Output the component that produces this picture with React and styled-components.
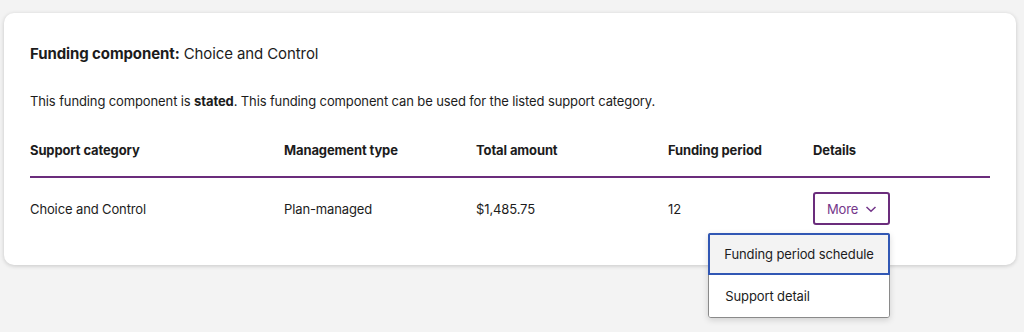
import styled, { createGlobalStyle } from "styled-components";

const GlobalStyle = createGlobalStyle`
  body {
    margin: 0;
    background: #f3f3f3;
    font-family: Inter, "Noto Sans", sans-serif;
    color: #1c1c1c;
  }
`;

const Page = styled.div`
  padding: 13px 8px 0 4px;
  height: 332px;
  box-sizing: border-box;
`;

const Card = styled.section`
  background: #fff;
  border-radius: 10px;
  box-shadow: 0 1px 4px rgba(0, 0, 0, 0.18);
  padding: 31px 26px 26px 26px;
  height: 252px;
  box-sizing: border-box;
`;

const Title = styled.h2`
  margin: 0;
  font-size: 15px;
  font-weight: 400;
  line-height: 20px;
  letter-spacing: -0.1px;
  b {
    font-weight: 700;
  }
`;

const Lead = styled.p`
  margin: 27px 0 0;
  font-size: 13px;
  line-height: 20px;
  letter-spacing: -0.12px;
`;

const Table = styled.div`
  margin-top: 29px;
  width: 960px;
`;

const Row = styled.div`
  display: grid;
  grid-template-columns: 254px 192px 192px 145px 1fr;
  align-items: center;
  line-height: 20px;
  font-size: 13px;
  letter-spacing: -0.12px;
  font-weight: ${(p) => (p.$head ? 700 : 400)};
  padding-bottom: ${(p) => (p.$head ? "16px" : "0")};
  height: ${(p) => (p.$head ? "auto" : "61px")};
  border-bottom: ${(p) => (p.$head ? "2px solid #6b2d7c" : "none")};
`;

const Cell = styled.div``;

const ButtonWrap = styled.div`
  position: relative;
  display: inline-block;
`;

const MoreButton = styled.button`
  display: inline-flex;
  align-items: center;
  gap: 7px;
  height: 33px;
  padding: 0 11px 0 12px;
  background: #fff;
  border: 2px solid #6b2d7c;
  border-radius: 3px;
  color: #74368a;
  font-family: inherit;
  font-size: 13px;
  letter-spacing: -0.12px;
`;

const Menu = styled.ul`
  position: absolute;
  top: 41px;
  right: 0;
  width: 180px;
  margin: 0;
  padding: 0;
  list-style: none;
  background: #fff;
  border: 1px solid #8a8a8a;
  border-radius: 3px;
  box-shadow: 0 2px 6px rgba(0, 0, 0, 0.15);
  z-index: 2;
`;

const MenuItem = styled.li`
  height: 42px;
  box-sizing: border-box;
  display: flex;
  align-items: center;
  padding: 0 14px;
  font-size: 13px;
  letter-spacing: -0.12px;
  white-space: nowrap;
  background: ${(p) => (p.$active ? "#f3f3f3" : "#fff")};
  border: 2px solid ${(p) => (p.$active ? "#3157b4" : "transparent")};
  border-radius: ${(p) => (p.$active ? "2px 2px 0 0" : "0 0 2px 2px")};
  margin: ${(p) => (p.$active ? "-1px -1px 0" : "0")};
`;

function Chevron() {
  return (
    <svg width="12" height="12" viewBox="0 0 12 12" fill="none">
      <path d="M1.5 4 6 8.3 10.5 4" stroke="#74368a" strokeWidth="1.5" />
    </svg>
  );
}

export default function App() {
  return (
    <Page>
      <GlobalStyle />
      <Card>
        <Title>
          <b>Funding component:</b> Choice and Control
        </Title>
        <Lead>
          This funding component is <b>stated</b>. This funding component can be used for the listed
          support category.
        </Lead>
        <Table>
          <Row $head>
            <Cell>Support category</Cell>
            <Cell>Management type</Cell>
            <Cell>Total amount</Cell>
            <Cell>Funding period</Cell>
            <Cell>Details</Cell>
          </Row>
          <Row>
            <Cell>Choice and Control</Cell>
            <Cell>Plan-managed</Cell>
            <Cell>$1,485.75</Cell>
            <Cell>12</Cell>
            <Cell>
              <ButtonWrap>
                <MoreButton>
                  More
                  <Chevron />
                </MoreButton>
                <Menu>
                  <MenuItem $active>Funding period schedule</MenuItem>
                  <MenuItem>Support detail</MenuItem>
                </Menu>
              </ButtonWrap>
            </Cell>
          </Row>
        </Table>
      </Card>
    </Page>
  );
}
